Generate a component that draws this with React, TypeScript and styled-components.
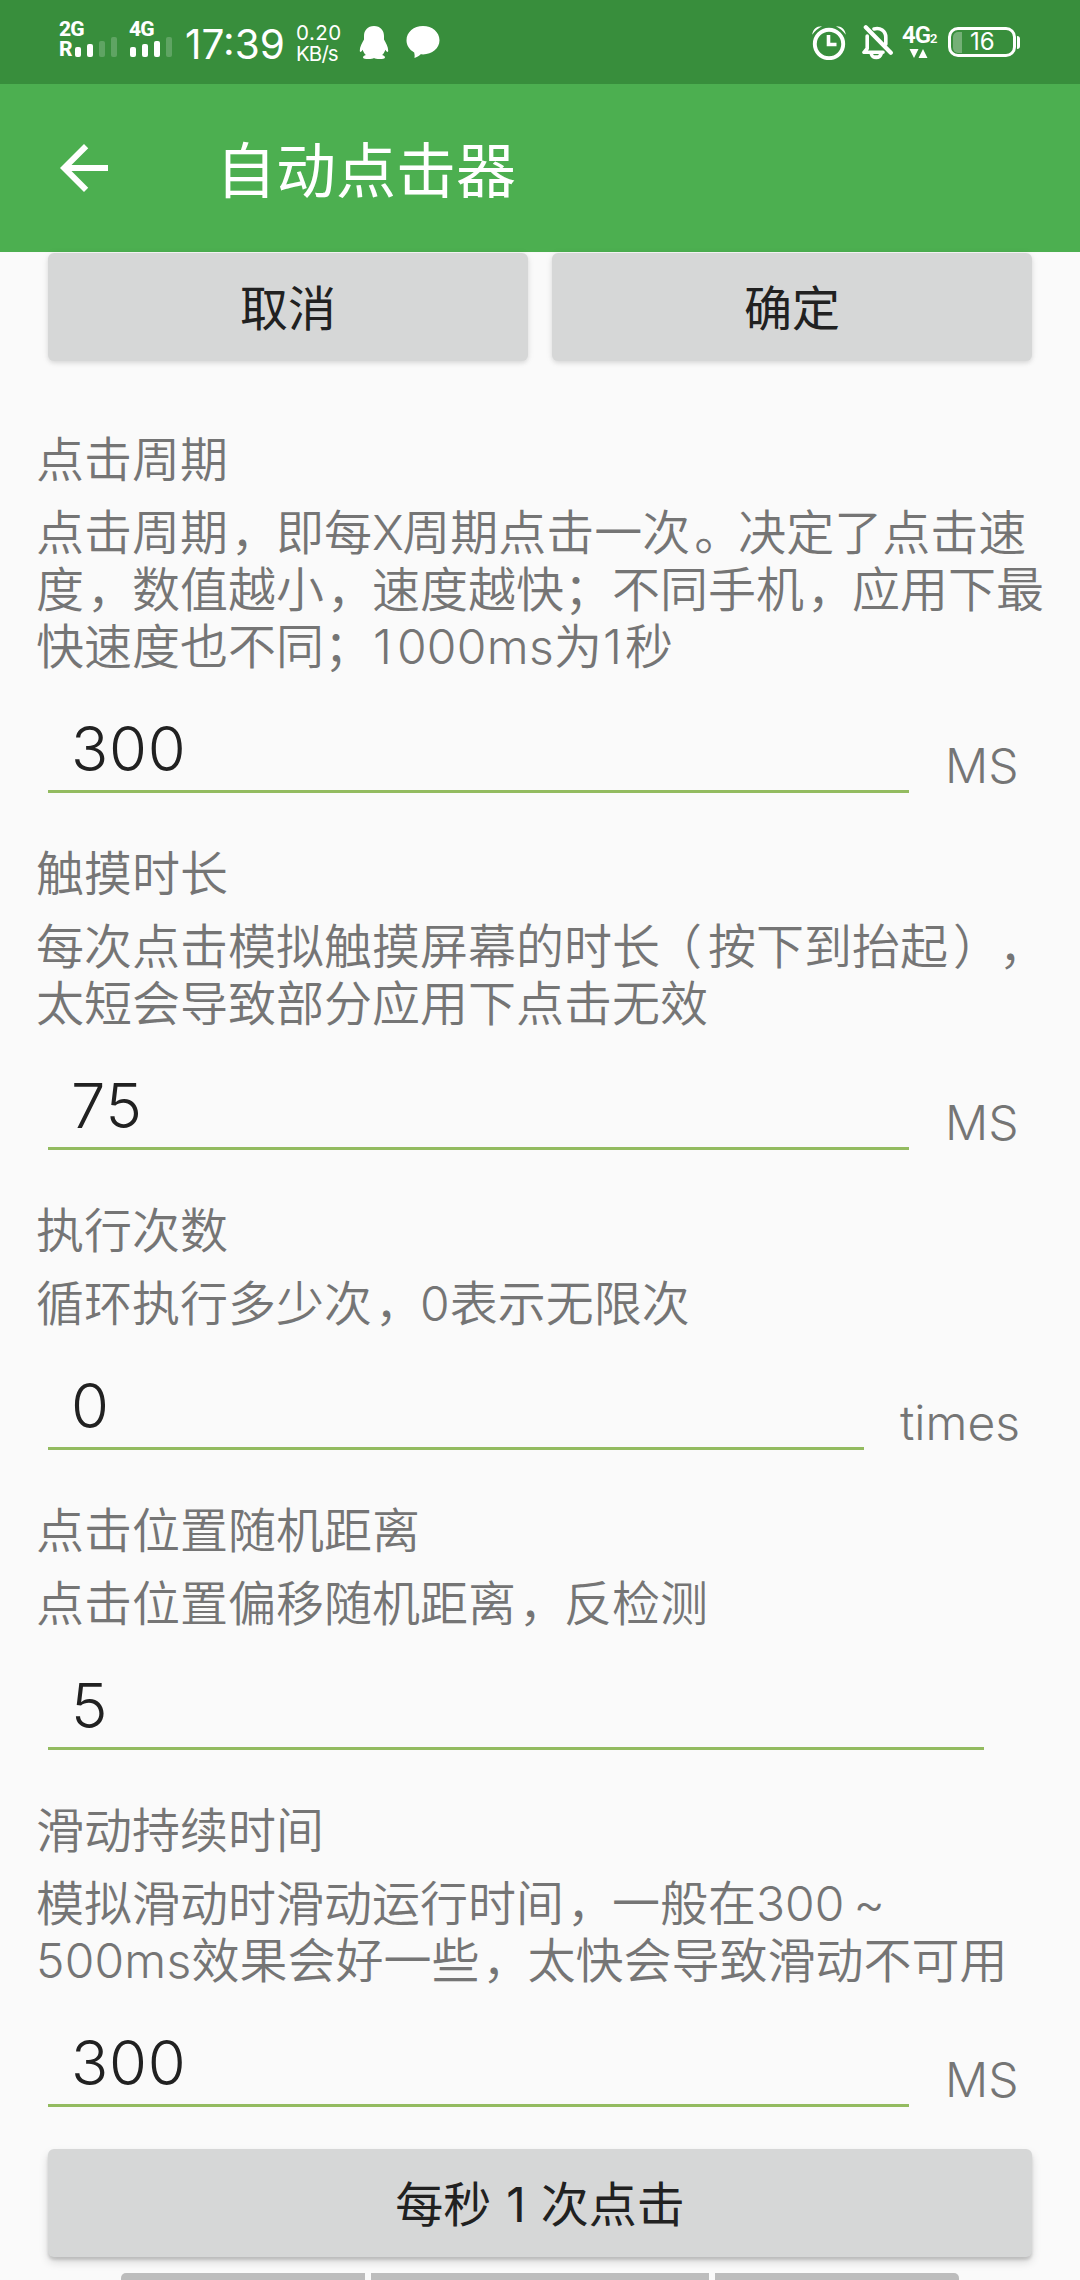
import React from "react";
import styled, { createGlobalStyle } from "styled-components";

const GlobalStyle = createGlobalStyle`
  * { box-sizing: border-box; }
  html, body { margin: 0; padding: 0; background: #fafafa; }
  body {
    font-family: Inter, "Noto Sans CJK SC", sans-serif;
    text-spacing-trim: space-all;
    overflow: hidden;
  }
`;

const Screen = styled.div`
  width: 1080px;
  height: 2280px;
  overflow: hidden;
  display: flex;
  flex-direction: column;
  background: #fafafa;
`;

const StatusBar = styled.header`
  flex: none;
  height: 84px;
  padding: 22px 60px 0 59px;
  display: flex;
  justify-content: space-between;
  align-items: flex-start;
  background: #388e3c;
  color: #fff;
`;

const StatusGroup = styled.div`
  display: flex;
  align-items: flex-start;
`;

const Signal = styled.div<{ $width: number }>`
  width: ${(p) => p.$width}px;
  display: flex;
  flex-direction: column;
  gap: 5px;
`;

const SignalLabel = styled.span`
  height: 15px;
  line-height: 15px;
  font-family: Roboto, sans-serif;
  font-size: 21px;
  font-weight: 800;
  letter-spacing: -0.8px;
  white-space: nowrap;
`;

const SignalRow = styled.div`
  display: flex;
  align-items: flex-end;
`;

const Roaming = styled(SignalLabel)`
  width: 15px;
`;

const Bars = styled.div`
  height: 20px;
  margin-top: -5px;
  display: flex;
  align-items: flex-end;
  gap: 6px;
  padding-left: 1px;
`;

const Bar = styled.i<{ $height: number; $dim?: boolean }>`
  width: 6px;
  height: ${(p) => p.$height}px;
  border-radius: 2px;
  background: ${(p) => (p.$dim ? "rgba(255,255,255,0.2)" : "#fff")};
`;

const Clock = styled.span`
  width: 111px;
  margin-top: 7px;
  line-height: 32px;
  font-size: 40.5px;
  font-weight: 400;
  white-space: nowrap;
`;

const Speed = styled.div`
  width: 63px;
  display: flex;
  flex-direction: column;
  font-size: 20.5px;
  line-height: 21px;
  white-space: nowrap;
`;

const SpeedValue = styled.span`
  letter-spacing: 0.5px;
`;

const SpeedUnit = styled.span`
  letter-spacing: -0.9px;
`;

const StatusIcon = styled.svg<{ $gap?: number; $top?: number }>`
  flex: none;
  display: block;
  margin-top: ${(p) => p.$top ?? 3}px;
  margin-right: ${(p) => p.$gap ?? 0}px;
`;

const Network = styled.div`
  width: 46px;
  margin-top: 5px;
  display: flex;
  flex-direction: column;
`;

const NetworkLabel = styled.span`
  height: 17px;
  line-height: 17px;
  font-family: Roboto, sans-serif;
  font-size: 24px;
  font-weight: 600;
  letter-spacing: -1px;
  white-space: nowrap;
`;

const NetworkIndex = styled.small`
  font-size: 13px;
`;

const Battery = styled.div`
  margin-top: 5px;
  display: flex;
  align-items: center;
  gap: 1px;
`;

const BatteryShell = styled.div`
  width: 68px;
  height: 30px;
  padding: 2px;
  display: flex;
  align-items: center;
  border: 3px solid #fff;
  border-radius: 10px;
`;

const BatteryLevel = styled.i`
  width: 9px;
  height: 21px;
  border-radius: 5px 0 0 5px;
  background: rgba(255, 255, 255, 0.3);
`;

const BatteryText = styled.span`
  flex: 1;
  padding-left: 8px;
  font-size: 24px;
  line-height: 24px;
`;

const BatteryTip = styled.i`
  width: 3px;
  height: 13px;
  border-radius: 0 3px 3px 0;
  background: #fff;
`;

const AppBar = styled.div`
  flex: none;
  height: 168px;
  padding-left: 48px;
  display: flex;
  align-items: center;
  background: #4caf50;
  color: #fff;
`;

const BackIcon = styled.svg`
  display: block;
  width: 72px;
  height: 72px;
`;

const Title = styled.h1`
  margin: 0 0 0 96px;
  padding-top: 5px;
  font-size: 60px;
  line-height: 72px;
  font-weight: 400;
`;

const ButtonRow = styled.div<{ $top?: number }>`
  flex: none;
  display: flex;
  gap: 24px;
  padding: ${(p) => p.$top ?? 0}px 48px 0;
`;

const Button = styled.button<{ $raised?: boolean }>`
  flex: 1;
  height: 108px;
  padding: 3px 0 0;
  border: 0;
  border-radius: 6px;
  background: #d6d7d7;
  color: #212121;
  font: 400 48px/57px Inter, "Noto Sans CJK SC", sans-serif;
  word-spacing: 1.5px;
  box-shadow: ${(p) =>
    p.$raised
      ? "0 3px 3px rgba(0,0,0,0.14), 0 5px 10px rgba(0,0,0,0.14)"
      : "0 2px 4px rgba(0,0,0,0.1), 0 1px 8px rgba(0,0,0,0.06)"};
`;

const Form = styled.main`
  flex: none;
  padding-top: 70px;
`;

const Section = styled.section`
  display: flex;
  flex-direction: column;
  padding-bottom: 52px;
  color: #757575;

  &:last-child {
    padding-bottom: 42px;
  }
`;

const Label = styled.h2`
  margin: 0 0 16px;
  padding-left: 36px;
  font-size: 48px;
  line-height: 57px;
  font-weight: 350;
`;

const Description = styled.p`
  margin: 0;
  padding-left: 36px;
  font-size: 48px;
  line-height: 57px;
  font-weight: 350;
  white-space: nowrap;
`;

const Line = styled.span`
  display: block;
`;

const Latin = styled.span<{ $spacing: number }>`
  letter-spacing: ${(p) => p.$spacing}px;
`;

const One = styled.span<{ $after: number }>`
  margin-left: 1px;
  margin-right: ${(p) => p.$after}px;
`;

const Mark = styled.span<{ $shift: number }>`
  margin-left: ${(p) => p.$shift}px;
  margin-right: ${(p) => -p.$shift}px;
`;

const Tilde = styled.span`
  margin-left: 9px;
`;

const FieldRow = styled.div`
  height: 118px;
  padding: 0 60px 0 48px;
  display: flex;
  align-items: flex-end;
  gap: 36px;
`;

const Field = styled.div`
  flex: 1;
  padding-left: 23px;
  border-bottom: 3px solid #93bb60;
  color: #212121;
  font-size: 61.5px;
  line-height: 83px;
  font-weight: 300;
  letter-spacing: 0.8px;
`;

const Unit = styled.span<{ $width: number }>`
  width: ${(p) => p.$width}px;
  font-size: 48px;
  line-height: 54px;
  font-weight: 350;
  white-space: nowrap;
`;

const BottomPills = styled.div`
  flex: none;
  display: flex;
  gap: 6px;
  padding: 16px 121px 0;
`;

const Pill = styled.i<{ $grow: number; $side?: "left" | "right" }>`
  flex: ${(p) => p.$grow} 1 0;
  height: 14px;
  background: #bdbdbd;
  border-radius: ${(p) =>
    p.$side === "left" ? "5px 0 0 5px" : p.$side === "right" ? "0 5px 5px 0" : "0"};
`;

type Setting = {
  label: string;
  lines: React.ReactNode[];
  value: string;
  unit: string;
  unitWidth: number;
};

const settings: Setting[] = [
  {
    label: "点击周期",
    lines: [
      <>
        点击周期<Mark $shift={3}>，</Mark>即每<Latin $spacing={-1.5}>X</Latin>周期点击一次
        <Mark $shift={4}>。</Mark>决定了点击速
      </>,
      <>
        度<Mark $shift={3}>，</Mark>数值越小<Mark $shift={3}>，</Mark>速度越快；不同手机
        <Mark $shift={3}>，</Mark>应用下最
      </>,
      <>
        快速度也不同；<One $after={5}>1</One>
        <Latin $spacing={0.3}>000ms</Latin>为<One $after={3}>1</One>秒
      </>,
    ],
    value: "300",
    unit: "MS",
    unitWidth: 75,
  },
  {
    label: "触摸时长",
    lines: [
      <>
        每次点击模拟触摸屏幕的时长<Mark $shift={-6}>（</Mark>按下到抬起
        <Mark $shift={5}>）</Mark>
        <Mark $shift={3}>，</Mark>
      </>,
      "太短会导致部分应用下点击无效",
    ],
    value: "75",
    unit: "MS",
    unitWidth: 75,
  },
  {
    label: "执行次数",
    lines: [<>循环执行多少次<Mark $shift={3}>，</Mark>0表示无限次</>],
    value: "0",
    unit: "times",
    unitWidth: 120,
  },
  {
    label: "点击位置随机距离",
    lines: [<>点击位置偏移随机距离<Mark $shift={3}>，</Mark>反检测</>],
    value: "5",
    unit: "",
    unitWidth: 0,
  },
  {
    label: "滑动持续时间",
    lines: [
      <>模拟滑动时滑动运行时间<Mark $shift={3}>，</Mark>一般在300<Tilde>~</Tilde></>,
      <>
        <Latin $spacing={0.2}>500ms</Latin>效果会好一些<Mark $shift={3}>，</Mark>太快会导致滑动不可用
      </>,
    ],
    value: "300",
    unit: "MS",
    unitWidth: 75,
  },
];

function SignalBars({ active }: { active: number }) {
  return (
    <Bars>
      {[10, 13, 16, 20].map((h, i) => (
        <Bar key={h} $height={h} $dim={i >= active} />
      ))}
    </Bars>
  );
}

function SettingBlock({ label, lines, value, unit, unitWidth }: Setting) {
  return (
    <Section>
      <Label>{label}</Label>
      <Description>
        {lines.map((line, i) => (
          <Line key={i}>{line}</Line>
        ))}
      </Description>
      <FieldRow>
        <Field>{value}</Field>
        <Unit $width={unitWidth}>{unit}</Unit>
      </FieldRow>
    </Section>
  );
}

export default function App() {
  return (
    <Screen>
      <GlobalStyle />
      <StatusBar>
        <StatusGroup>
          <Signal $width={70}>
            <SignalLabel>2G</SignalLabel>
            <SignalRow>
              <Roaming>R</Roaming>
              <SignalBars active={2} />
            </SignalRow>
          </Signal>
          <Signal $width={56}>
            <SignalLabel>4G</SignalLabel>
            <SignalRow>
              <SignalBars active={3} />
            </SignalRow>
          </Signal>
          <Clock>17:39</Clock>
          <Speed>
            <SpeedValue>0.20</SpeedValue>
            <SpeedUnit>KB/s</SpeedUnit>
          </Speed>
          <StatusIcon width="30" height="34" viewBox="0 0 30 34" fill="#fff" $gap={17}>
            <path d="M15 1C8.600 1 5 5.500 5 11v3.500C3 18 .8 22 .8 25.500c0 2.200 1.100 1.900 2.900-.8.500 2 1.600 3.900 3.200 5.300-2 .6-2.900 1.500-2.900 2.500 0 1.200 2.500 1.500 5.500 1.500 2.500 0 4.500-.4 5.500-1 1 .6 3 1 5.500 1 3 0 5.500-.3 5.500-1.500 0-1-.9-1.900-2.900-2.500 1.600-1.400 2.700-3.300 3.200-5.300 1.800 2.700 2.900 3 2.900.8 0-3.500-2.200-7.500-4.200-11V11C25 5.500 21.400 1 15 1z" />
          </StatusIcon>
          <StatusIcon width="34" height="34" viewBox="0 0 34 34" fill="#fff">
            <path d="M17 1C7.800 1 .5 7 .5 15.300c0 5.200 3 9.600 7.700 12.100.5 1.700.6 3.500.3 5.600 2.400-.7 4.500-2 6.200-3.700.8.100 1.500.1 2.300.1 9.200 0 16.500-6 16.500-14.100C33.500 7 26.200 1 17 1z" />
          </StatusIcon>
        </StatusGroup>
        <StatusGroup>
          <StatusIcon
            width="34"
            height="35"
            viewBox="0 0 34 35"
            fill="none"
            stroke="#fff"
            strokeWidth="3.900"
            $gap={16}
          >
            <circle cx="17" cy="19" r="14.200" />
            <path d="M16.500 10v9.500h8" strokeWidth="3.600" />
            <path
              d="M.2 9.800C.8 4.500 4.500 1 10 1.200 6 3.400 3.200 5.600.2 9.800zM33.800 9.800C33.200 4.500 29.500 1 24 1.200c4 2.200 6.800 4.400 9.800 8.600z"
              fill="#fff"
              stroke="none"
            />
          </StatusIcon>
          <StatusIcon width="32" height="35" viewBox="0 0 32 35" fill="none" $gap={8}>
            <path
              d="M5.200 11v12.500L2 27.300h19M12 3.900c6-1.600 11.800 1.600 11.800 8.400v7"
              stroke="#fff"
              strokeWidth="3.600"
              strokeLinecap="round"
              strokeLinejoin="round"
            />
            <path d="M7.500 29c.8 3.300 3.300 5.300 6.800 5.300 3.400 0 5.700-2 6.700-5.300h-4l-1 1.300h-4L11 29z" fill="#fff" />
            <path d="M3.800 2.300l25 25.500" stroke="#fff" strokeWidth="4.200" strokeLinecap="round" />
          </StatusIcon>
          <Network>
            <NetworkLabel>
              4G<NetworkIndex>2</NetworkIndex>
            </NetworkLabel>
            <StatusIcon width="34" height="10" viewBox="0 0 34 10" fill="#fff" $top={5}>
              <path d="M7.500 0h9L12 9zM16.500 9h9L21 0z" />
            </StatusIcon>
          </Network>
          <Battery>
            <BatteryShell>
              <BatteryLevel />
              <BatteryText>16</BatteryText>
            </BatteryShell>
            <BatteryTip />
          </Battery>
        </StatusGroup>
      </StatusBar>

      <AppBar>
        <BackIcon viewBox="0 0 24 24" fill="#fff">
          <path d="M20 11H7.830l5.590-5.590L12 4l-8 8 8 8 1.410-1.410L7.830 13H20v-2z" />
        </BackIcon>
        <Title>自动点击器</Title>
      </AppBar>

      <ButtonRow $top={1}>
        <Button>取消</Button>
        <Button>确定</Button>
      </ButtonRow>

      <Form>
        {settings.map((s) => (
          <SettingBlock key={s.label} {...s} />
        ))}
      </Form>

      <ButtonRow>
        <Button $raised>每秒 1 次点击</Button>
      </ButtonRow>

      <BottomPills>
        <Pill $grow={244} $side="left" />
        <Pill $grow={338} />
        <Pill $grow={244} $side="right" />
      </BottomPills>
    </Screen>
  );
}
